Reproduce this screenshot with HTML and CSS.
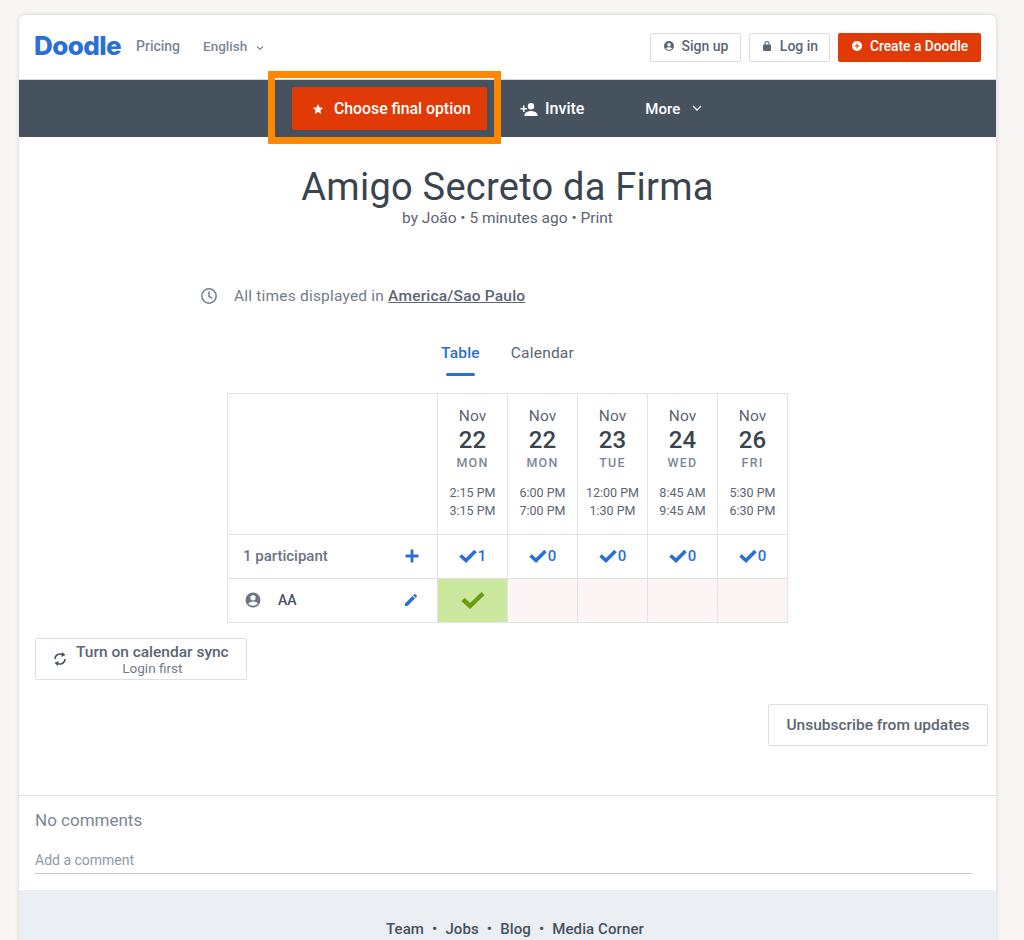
FILE: index.html
```html
<!DOCTYPE html>
<html lang="en">
<head>
    <meta charset="UTF-8">
    <meta name="viewport" content="width=device-width, initial-scale=1.0">
    <title>Amigo Secreto da Firma</title>
    <link rel="stylesheet" href="styles.css">
</head>
<body>
<div class="card">
    <header class="topbar">
        <span class="logo">Doodle</span>
        <a class="top-link pricing">Pricing</a>
        <a class="top-link lang">English
            <svg class="lang-caret" width="8" height="6" viewBox="0 0 8 6"><path d="M1 1.500l3 3 3-3" fill="none" stroke="#7c8796" stroke-width="1.200"/></svg>
        </a>
        <div class="top-actions">
            <button class="btn-top signup">
                <svg width="12" height="12" viewBox="0 0 24 24"><path fill="#5b6573" d="M12 2a10 10 0 100 20 10 10 0 000-20zm0 4a3.500 3.500 0 110 7 3.500 3.500 0 010-7zm0 14a8 8 0 01-6.200-3c.9-1.800 3.900-2.700 6.200-2.700s5.300.9 6.200 2.700A8 8 0 0112 20z"/></svg>
                Sign up
            </button>
            <button class="btn-top login">
                <svg width="12" height="12" viewBox="0 0 24 24"><path fill="#5b6573" d="M18 9h-1V7a5 5 0 00-10 0v2H6a2 2 0 00-2 2v9a2 2 0 002 2h12a2 2 0 002-2v-9a2 2 0 00-2-2zM9 7a3 3 0 016 0v2H9V7z"/></svg>
                Log in
            </button>
            <button class="btn-create">
                <svg width="12" height="12" viewBox="0 0 24 24"><path fill="#fff" d="M12 2a10 10 0 100 20 10 10 0 000-20zm5 11h-4v4h-2v-4H7v-2h4V7h2v4h4v2z"/></svg>
                Create a Doodle
            </button>
        </div>
    </header>

    <nav class="actionbar">
        <div class="final-wrap">
            <button class="btn-final">
                <svg width="12" height="12" viewBox="0 0 24 24"><path fill="#fff" d="M12 2l3 7 7.500 .6-5.700 4.900 1.700 7.300L12 18l-6.500 3.800 1.700-7.300L1.500 9.600 9 9z"/></svg>
                Choose final option
            </button>
            <!-- orange highlight drawn over the bar -->
            <div class="highlight"></div>
        </div>
        <a class="bar-link invite">
            <svg width="18" height="14" viewBox="0 0 18 14"><path fill="#fff" d="M11 1a3.200 3.200 0 110 6.400A3.200 3.200 0 0111 1zM4.500 13c0-2.600 4.300-4 6.500-4s6.500 1.400 6.500 4v1h-13zM3 3.500h1.500V6H7v1.400H4.500V10H3V7.400H.5V6H3z"/></svg>
            Invite
        </a>
        <a class="bar-link more">More
            <svg width="10" height="7" viewBox="0 0 10 7"><path d="M1 1l4 4 4-4" fill="none" stroke="#fff" stroke-width="1.300"/></svg>
        </a>
    </nav>

    <main class="poll">
        <h1 class="poll-title">Amigo Secreto da Firma</h1>
        <p class="poll-meta">by João • 5 minutes ago • Print</p>

        <div class="timezone">
            <svg width="18" height="18" viewBox="0 0 18 18"><circle cx="9" cy="9" r="7.200" fill="none" stroke="#727c8a" stroke-width="1.500"/><path d="M9 4.500V9.300l3.200 2" fill="none" stroke="#727c8a" stroke-width="1.500"/></svg>
            <span>All times displayed in <a class="tz-link">America/Sao Paulo</a></span>
        </div>

        <div class="tabs">
            <span class="tab active">Table</span>
            <span class="tab">Calendar</span>
        </div>

        <div class="grid">
            <div class="cell corner"></div>
            <div class="cell date"><span class="month">Nov</span><span class="day">22</span><span class="dow">MON</span><span class="hours">2:15 PM<br>3:15 PM</span></div>
            <div class="cell date"><span class="month">Nov</span><span class="day">22</span><span class="dow">MON</span><span class="hours">6:00 PM<br>7:00 PM</span></div>
            <div class="cell date"><span class="month">Nov</span><span class="day">23</span><span class="dow">TUE</span><span class="hours">12:00 PM<br>1:30 PM</span></div>
            <div class="cell date"><span class="month">Nov</span><span class="day">24</span><span class="dow">WED</span><span class="hours">8:45 AM<br>9:45 AM</span></div>
            <div class="cell date"><span class="month">Nov</span><span class="day">26</span><span class="dow">FRI</span><span class="hours">5:30 PM<br>6:30 PM</span></div>

            <div class="cell name-cell">
                <span class="count-label">1 participant</span>
                <svg width="14" height="14" viewBox="0 0 14 14"><path d="M7 0.500v13M0.500 7h13" stroke="#2a6fd6" stroke-width="2.800"/></svg>
            </div>
            <div class="cell count"><svg class="tick" width="18" height="14" viewBox="0 0 18 14"><path d="M1.500 6.500l5.500 5L16.500 2" fill="none" stroke="#2a6fd6" stroke-width="3.600"/></svg>1</div>
            <div class="cell count"><svg class="tick" width="18" height="14" viewBox="0 0 18 14"><path d="M1.500 6.500l5.500 5L16.500 2" fill="none" stroke="#2a6fd6" stroke-width="3.600"/></svg>0</div>
            <div class="cell count"><svg class="tick" width="18" height="14" viewBox="0 0 18 14"><path d="M1.500 6.500l5.500 5L16.500 2" fill="none" stroke="#2a6fd6" stroke-width="3.600"/></svg>0</div>
            <div class="cell count"><svg class="tick" width="18" height="14" viewBox="0 0 18 14"><path d="M1.500 6.500l5.500 5L16.500 2" fill="none" stroke="#2a6fd6" stroke-width="3.600"/></svg>0</div>
            <div class="cell count"><svg class="tick" width="18" height="14" viewBox="0 0 18 14"><path d="M1.500 6.500l5.500 5L16.500 2" fill="none" stroke="#2a6fd6" stroke-width="3.600"/></svg>0</div>

            <div class="cell name-cell person">
                <svg class="avatar" width="18" height="18" viewBox="0 0 24 24"><path fill="#6b7583" d="M12 2a10 10 0 100 20 10 10 0 000-20zm0 3.500a3.600 3.600 0 110 7.200 3.600 3.600 0 010-7.200zm0 14.300a8 8 0 01-6.300-3.100c1-1.800 4-2.700 6.300-2.700s5.300.9 6.300 2.700a8 8 0 01-6.300 3.100z"/></svg>
                <span class="person-name">AA</span>
                <svg width="16" height="16" viewBox="0 0 24 24"><path fill="#2a6fd6" d="M3 17.200V21h3.800L17.900 9.900l-3.800-3.800L3 17.200zM20.700 7c.4-.4.400-1 0-1.400l-2.300-2.300c-.4-.4-1-.4-1.400 0l-1.800 1.800 3.800 3.800L20.700 7z"/></svg>
            </div>
            <div class="cell vote yes"><svg width="24" height="18" viewBox="0 0 24 18"><path d="M2 8.500l7 6.500L22 2.500" fill="none" stroke="#6a9c14" stroke-width="4.500"/></svg></div>
            <div class="cell vote no"></div>
            <div class="cell vote no"></div>
            <div class="cell vote no"></div>
            <div class="cell vote no"></div>
        </div>

        <button class="btn-sync">
            <svg width="14" height="16" viewBox="0 0 14 16"><path d="M2 8a5 5 0 018-4M12 8a5 5 0 01-8 4" fill="none" stroke="#47525f" stroke-width="1.500"/><path fill="#47525f" d="M9 1l3.500 3L8.500 6zM5 15l-3.500-3 4-2z"/></svg>
            <span class="sync-text"><span class="sync-main">Turn on calendar sync</span><span class="sync-sub">Login first</span></span>
        </button>

        <div class="unsub-row">
            <button class="btn-unsub">Unsubscribe from updates</button>
        </div>
    </main>

    <section class="comments">
        <h2 class="comments-title">No comments</h2>
        <div class="comment-input">Add a comment</div>
    </section>

    <footer class="footer">
        <a>Team</a><span class="dot">•</span><a>Jobs</a><span class="dot">•</span><a>Blog</a><span class="dot">•</span><a>Media Corner</a>
    </footer>
</div>
</body>
</html>
```

FILE: styles.css
```css
html, body {
    margin: 0;
    padding: 0;
    height: 940px;
    overflow: hidden;
}

body {
    background-color: #f8f7f5;
    font-family: "Roboto", "Noto Sans", sans-serif;
    color: #47525f;
}

button {
    font-family: inherit;
    cursor: pointer;
}

.card {
    width: 977px;
    height: 925px;
    margin: 15px 0 0 19px;
    background-color: #fff;
    border-radius: 6px 6px 0 0;
    box-shadow: 0 0 4px rgba(60, 60, 60, 0.22);
    overflow: hidden;
}

/* top header */
.topbar {
    display: flex;
    align-items: center;
    height: 64px;
    padding: 0 15px;
    border-bottom: 1px solid #d5d9de;
    box-sizing: content-box;
}

.logo {
    font-family: "Inter", sans-serif;
    font-size: 26px;
    font-weight: 800;
    letter-spacing: -0.6px;
    color: #2a6fd6;
    width: 87px;
    margin-top: -4px;
}

.top-link {
    margin-top: -2px;
    font-size: 14px;
    font-weight: 500;
    color: #7c8796;
}

.pricing {
    margin-left: 15px;
}

.lang {
    margin-left: 23px;
    font-size: 13.500px;
}

.lang-caret {
    margin-left: 5px;
}

.top-actions {
    display: flex;
    gap: 8px;
    margin-left: auto;
}

.btn-top {
    display: flex;
    align-items: center;
    justify-content: center;
    gap: 7px;
    height: 29px;
    padding: 0 0 2px;
    background-color: #fff;
    border: 1px solid #d9dde2;
    border-radius: 2px;
    font-size: 14px;
    font-weight: 500;
    color: #5b6573;
}

.signup {
    width: 91px;
}

.login {
    width: 81px;
}

.btn-create {
    display: flex;
    align-items: center;
    justify-content: center;
    gap: 7px;
    width: 143px;
    height: 29px;
    padding: 0 0 2px;
    background-color: #e03a06;
    border: none;
    border-radius: 2px;
    font-size: 13.800px;
    font-weight: 500;
    color: #fff;
}

/* dark action bar */
.actionbar {
    display: flex;
    align-items: center;
    height: 57px;
    padding-left: 273px;
    background-color: #47525f;
}

.final-wrap {
    position: relative;
}

.btn-final {
    display: flex;
    align-items: center;
    gap: 10px;
    width: 195px;
    height: 43px;
    padding: 0 0 0 20px;
    background-color: #e03a06;
    border: none;
    border-radius: 2px;
    font-size: 15.800px;
    font-weight: 500;
    color: #fff;
}

.highlight {
    position: absolute;
    left: -24px;
    top: -16px;
    width: 219px;
    height: 59px;
    border: 7px solid #ff8800;
}

.bar-link {
    display: flex;
    align-items: center;
    font-size: 16px;
    font-weight: 500;
    color: #fff;
}

.invite {
    gap: 7px;
    margin-left: 33px;
}

.more {
    gap: 12px;
    margin-left: 61px;
    font-size: 15px;
}

/* poll header */
.poll {
    height: 658px;
    text-align: center;
}

.poll-title {
    margin: 0;
    padding-top: 26px;
    font-size: 38px;
    font-weight: 400;
    line-height: 48px;
    letter-spacing: 0.25px;
    color: #3a444f;
}

.poll-meta {
    margin: -3px 0 0;
    font-size: 15.500px;
    line-height: 20px;
    color: #5b6573;
}

.timezone {
    display: flex;
    align-items: center;
    gap: 16px;
    margin: 56px 0 0 181px;
    font-size: 15.500px;
    letter-spacing: 0.2px;
    line-height: 24px;
    color: #727c8a;
}

.tz-link {
    font-weight: 500;
    color: #5b6573;
    text-decoration: underline;
}

.tabs {
    display: flex;
    justify-content: center;
    gap: 31px;
    margin-top: 33px;
    font-size: 15.500px;
    letter-spacing: 0.2px;
    line-height: 24px;
}

.tab {
    position: relative;
    color: #5b6573;
    padding-bottom: 28px;
}

.tab.active {
    color: #2a6fd6;
    font-weight: 500;
}

.tab.active::after {
    content: "";
    position: absolute;
    left: 5px;
    right: 5px;
    bottom: 17px;
    height: 3px;
    border-radius: 2px;
    background-color: #2a6fd6;
}

/* poll table */
.grid {
    display: grid;
    grid-template-columns: 210px repeat(5, 70px);
    grid-template-rows: 141px 44px 44px;
    width: 561px;
    margin: 0 0 0 208px;
    border-top: 1px solid #e0e3e7;
    border-left: 1px solid #e0e3e7;
    box-sizing: content-box;
}

.cell {
    box-sizing: border-box;
    border-right: 1px solid #e0e3e7;
    border-bottom: 1px solid #e0e3e7;
}

.date {
    display: flex;
    flex-direction: column;
    align-items: center;
    padding-top: 13px;
}

.month {
    font-size: 15.500px;
    line-height: 18px;
    color: #5b6573;
}

.day {
    font-size: 24px;
    font-weight: 500;
    line-height: 30px;
    color: #3a444f;
}

.dow {
    font-size: 12.500px;
    font-weight: 500;
    letter-spacing: 1.200px;
    line-height: 16px;
    color: #7c8796;
}

.hours {
    margin-top: 13px;
    font-size: 12.500px;
    line-height: 18px;
    color: #5b6573;
}

.name-cell {
    display: flex;
    align-items: center;
    justify-content: space-between;
    padding: 0 18px 2px 15px;
}

.count-label {
    font-size: 15px;
    font-weight: 500;
    color: #6b7583;
}

.person {
    justify-content: flex-start;
    padding-left: 16px;
}

.person-name {
    margin-left: 16px;
    font-size: 14px;
    font-weight: 500;
    color: #47525f;
}

.person svg:last-child {
    margin-left: auto;
}

.count {
    display: flex;
    align-items: center;
    justify-content: center;
    gap: 1px;
    padding-bottom: 1px;
    font-size: 15px;
    font-weight: 500;
    color: #2a6fd6;
}

.vote {
    display: flex;
    align-items: center;
    justify-content: center;
    padding-bottom: 1px;
}

.vote.yes {
    background-color: #cbe89e;
}

.vote.no {
    background-color: #fdf5f5;
}

/* sync and unsubscribe */
.btn-sync {
    display: flex;
    align-items: center;
    gap: 9px;
    width: 212px;
    height: 42px;
    margin: 15px 0 0 16px;
    padding: 0 0 0 17px;
    background-color: #fff;
    border: 1px solid #dcdfe3;
    border-radius: 2px;
}

.sync-text {
    display: flex;
    flex-direction: column;
    align-items: center;
    margin-top: 2px;
}

.sync-main {
    font-size: 15.500px;
    font-weight: 500;
    line-height: 17px;
    color: #5b6573;
}

.sync-sub {
    font-size: 13.500px;
    line-height: 15px;
    color: #727c8a;
}

.unsub-row {
    display: flex;
    justify-content: flex-end;
    margin-top: 24px;
    padding-right: 8px;
}

.btn-unsub {
    width: 220px;
    height: 42px;
    padding: 0;
    background-color: #fff;
    border: 1px solid #dcdfe3;
    border-radius: 2px;
    font-size: 15.500px;
    font-weight: 500;
    color: #5b6573;
}

/* comments */
.comments {
    height: 94px;
    padding: 0 24px 0 16px;
    border-top: 1px solid #e0e3e7;
}

.comments-title {
    margin: 0;
    padding-top: 12px;
    font-size: 17px;
    font-weight: 400;
    line-height: 24px;
    color: #7c8796;
}

.comment-input {
    margin-top: 19px;
    padding-bottom: 4px;
    border-bottom: 1px solid #c3c8cf;
    font-size: 14px;
    line-height: 18px;
    color: #8f99a6;
}

.footer {
    display: flex;
    justify-content: center;
    gap: 8px;
    height: 50px;
    padding: 29px 0 0 15px;
    background-color: #ebeef2;
    font-size: 15px;
    letter-spacing: 0.1px;
    font-weight: 500;
    line-height: 20px;
    color: #47525f;
}
```
